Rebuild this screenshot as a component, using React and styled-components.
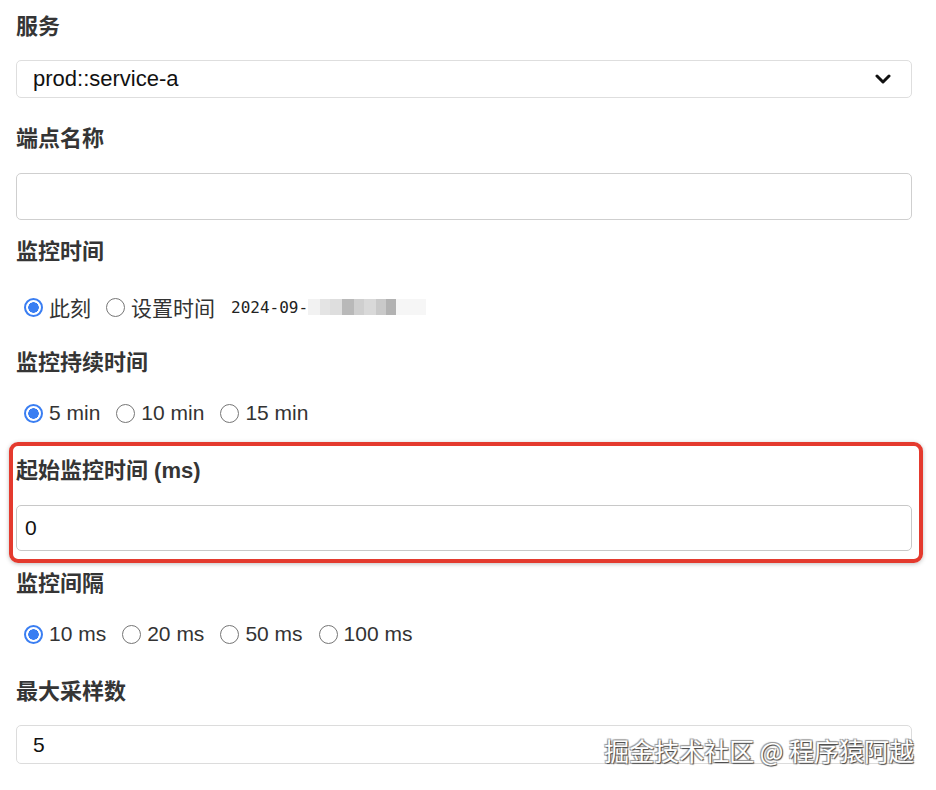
import React from "react";
import styled, { createGlobalStyle } from "styled-components";

const GlobalStyle = createGlobalStyle`
  body {
    margin: 0;
    background: #fff;
    font-family: "Liberation Sans", "Noto Sans CJK SC", sans-serif;
  }
`;

const Page = styled.div`
  position: relative;
  width: 936px;
  height: 790px;
  padding: 12px 24px 0 16px;
  box-sizing: border-box;
  overflow: hidden;
`;

const Field = styled.div`
  margin-bottom: ${(p) => p.$after || 0}px;
`;

const Label = styled.div`
  height: 30px;
  line-height: 30px;
  margin-bottom: ${(p) => p.$gap || 19}px;
  font-family: "Liberation Sans", "Noto Sans CJK SC", sans-serif;
  font-size: 22px;
  font-weight: 700;
  color: #353535;
`;

const SelectBox = styled.div`
  display: flex;
  align-items: center;
  justify-content: space-between;
  height: 38px;
  padding: 0 20px 0 16px;
  box-sizing: border-box;
  border: 1px solid #dedede;
  border-radius: 5px;
  font-size: 22px;
  color: #111;
`;

const TextInput = styled.div`
  display: flex;
  align-items: center;
  height: ${(p) => p.$h}px;
  padding-left: ${(p) => p.$pad || 8}px;
  box-sizing: border-box;
  border: 1px solid ${(p) => p.$border || "#cfcfcf"};
  border-radius: 5px;
  font-size: 21px;
  color: #111;
`;

const RadioRow = styled.div`
  display: flex;
  align-items: center;
  height: 30px;
  padding-left: 8px;
  font-size: 21px;
  color: #333;
`;

const Option = styled.label`
  display: flex;
  align-items: center;
  margin-right: ${(p) => p.$gap || 16}px;
`;

const Dot = styled.span`
  width: 19px;
  height: 19px;
  box-sizing: border-box;
  border-radius: 50%;
  margin-right: 6px;
  border: ${(p) => (p.$on ? "2px solid #3a7ef2" : "1.5px solid #767676")};
  background: ${(p) =>
    p.$on
      ? "radial-gradient(circle, #3a7ef2 0 5px, #fff 5.5px 100%)"
      : "#fff"};
`;

const DateText = styled.span`
  display: flex;
  align-items: center;
  font-family: "DejaVu Sans Mono", monospace;
  font-size: 16px;
  color: #222;
`;

const Mosaic = styled.span`
  display: inline-block;
  width: ${(p) => p.$w}px;
  height: 16px;
  background: ${(p) => p.$c};
`;

const Highlight = styled.div`
  margin: 0 -11px 6px -7px;
  padding: 10px 7px 8px 3px;
  border: 4px solid #e43a2e;
  border-radius: 9px;
  box-shadow: 0 1px 4px rgba(0, 0, 0, 0.25);
`;

const Watermark = styled.div`
  position: absolute;
  right: 22px;
  bottom: 22px;
  font-family: "Noto Sans CJK SC", sans-serif;
  font-size: 25px;
  color: #fff;
  text-shadow: 1px 1px 1px #444, -1px -1px 1px #999, 1px -1px 0 #aaa, -1px 1px 0 #aaa;
`;

const Chevron = () => (
  <svg width="16" height="12" viewBox="0 0 16 12">
    <path d="M2 3 L8 9 L14 3" fill="none" stroke="#111" strokeWidth="3" strokeLinecap="round" strokeLinejoin="round" />
  </svg>
);

const Radio = ({ on, children, gap }) => (
  <Option $gap={gap}>
    <Dot $on={on} />
    {children}
  </Option>
);

const mosaic = [
  ["#f2f2f2", 12], ["#e4e4e4", 10], ["#dedede", 12], ["#b9b9b9", 12],
  ["#cfcfcf", 10], ["#d9d9d9", 12], ["#c9c9c9", 10], ["#b2b2b2", 10], ["#f6f6f6", 30],
];

export default function App() {
  return (
    <Page>
      <GlobalStyle />
      <Field $after={26}>
        <Label $gap={18}>服务</Label>
        <SelectBox>
          <span>prod::service-a</span>
          <Chevron />
        </SelectBox>
      </Field>

      <Field $after={17}>
        <Label>端点名称</Label>
        <TextInput $h={47} />
      </Field>

      <Field $after={26}>
        <Label $gap={25}>监控时间</Label>
        <RadioRow>
          <Radio on gap={15}>此刻</Radio>
          <Radio>设置时间</Radio>
          <DateText>
            2024-09-
            {mosaic.map(([c, w], i) => (
              <Mosaic key={i} $c={c} $w={w} />
            ))}
          </DateText>
        </RadioRow>
      </Field>

      <Field $after={14}>
        <Label $gap={20}>监控持续时间</Label>
        <RadioRow>
          <Radio on>5 min</Radio>
          <Radio>10 min</Radio>
          <Radio>15 min</Radio>
        </RadioRow>
      </Field>

      <Highlight>
        <Label>起始监控时间 (ms)</Label>
        <TextInput $h={46} $border="#c8c8c8">0</TextInput>
      </Highlight>

      <Field $after={28}>
        <Label $gap={20}>监控间隔</Label>
        <RadioRow>
          <Radio on>10 ms</Radio>
          <Radio>20 ms</Radio>
          <Radio>50 ms</Radio>
          <Radio>100 ms</Radio>
        </RadioRow>
      </Field>

      <Field>
        <Label $gap={18}>最大采样数</Label>
        <TextInput $h={39} $pad={16} $border="#dcdcdc">5</TextInput>
      </Field>

      <Watermark>掘金技术社区 @ 程序猿阿越</Watermark>
    </Page>
  );
}
